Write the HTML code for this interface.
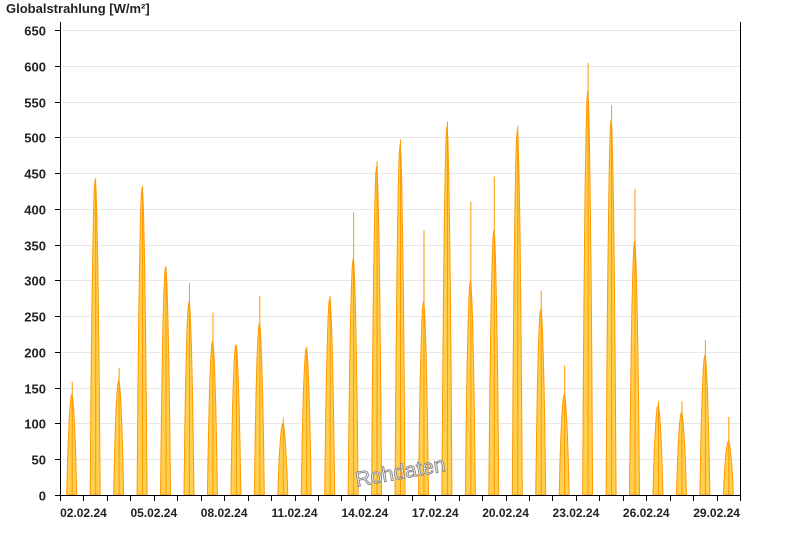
<!DOCTYPE html>
<html><head><meta charset="utf-8"><style>
body{margin:0;background:#fff;width:800px;height:550px;overflow:hidden;font-family:"Liberation Sans",Arial,sans-serif}
</style></head><body>
<svg id="s" width="800" height="550" xmlns="http://www.w3.org/2000/svg" font-family="Liberation Sans, Arial, sans-serif">
<text x="6" y="13" font-size="13" font-weight="bold" fill="#222">Globalstrahlung [W/m²]</text>
<g id="grid"></g>
<g id="bars"></g>
<line x1="60.5" y1="22" x2="60.5" y2="495" stroke="#000"/>
<line x1="740.5" y1="22" x2="740.5" y2="495" stroke="#000"/>
<line x1="60" y1="495.5" x2="741" y2="495.5" stroke="#000"/>
<g id="ax"></g>
<text x="400" y="479" font-size="21" fill="#eee" stroke="#888" stroke-width="0.9" text-anchor="middle" transform="rotate(-10 400 470)">Rohdaten</text>
</svg>
<script>
var ns="http://www.w3.org/2000/svg";
function el(p,t,a,txt){var e=document.createElementNS(ns,t);for(var k in a)e.setAttribute(k,a[k]);if(txt)e.textContent=txt;document.getElementById(p).appendChild(e);}
function Y(v){return 495-v*0.7154;}
for(var v=0;v<=650;v+=50){var y=Math.round(Y(v))+0.5;
 if(v>0)el("grid","line",{x1:61,x2:740,y1:y,y2:y,stroke:"#e8e8e8"});
 el("ax","line",{x1:55,x2:60,y1:y,y2:y,stroke:"#000"});
 el("ax","text",{x:46,y:y+5,"font-size":13,"font-weight":"bold","text-anchor":"end",fill:"#222"},""+v);}
function X(d){return 60+(d-1)*23.45;}
for(var d=1;d<=30;d++){var x=Math.round(X(d))+0.5;el("ax","line",{x1:x,x2:x,y1:495,y2:501,stroke:"#000"});}
var labs=["02.02.24","05.02.24","08.02.24","11.02.24","14.02.24","17.02.24","20.02.24","23.02.24","26.02.24","29.02.24"];
for(var i=0;i<labs.length;i++){el("ax","text",{x:X(2+3*i),y:517,"font-size":12,"font-weight":"bold","text-anchor":"middle",fill:"#222"},labs[i]);}
var mx=[158,443,178,432,320,296,255,210,278,108,207,278,395,467,497,370,522,410,445,516,285,181,604,545,428,131,131,217,109];
var body=[140,440,160,430,318,270,215,210,240,100,205,275,330,460,490,270,515,300,370,510,260,140,565,525,355,125,115,195,75];
for(var i=0;i<29;i++){
 var c=X(i+1.5),w=5,pts=[],n=12;
 for(var k=0;k<=n;k++){var t=k/n;var f=Math.pow(Math.sin(Math.PI*t),0.8);
   var vx=c-w+2*w*t;var v=body[i]*f;pts.push(vx.toFixed(1)+","+Y(v).toFixed(1));}
 el("bars","polygon",{points:(c-w)+",495 "+pts.join(" ")+" "+(c+w)+",495",fill:"#ffd050",stroke:"#ff9900","stroke-width":1});
 el("bars","line",{x1:c+0.5,x2:c+0.5,y1:495,y2:Y(mx[i]),stroke:"#ff9900","stroke-width":1});
}
</script>
</body></html>
